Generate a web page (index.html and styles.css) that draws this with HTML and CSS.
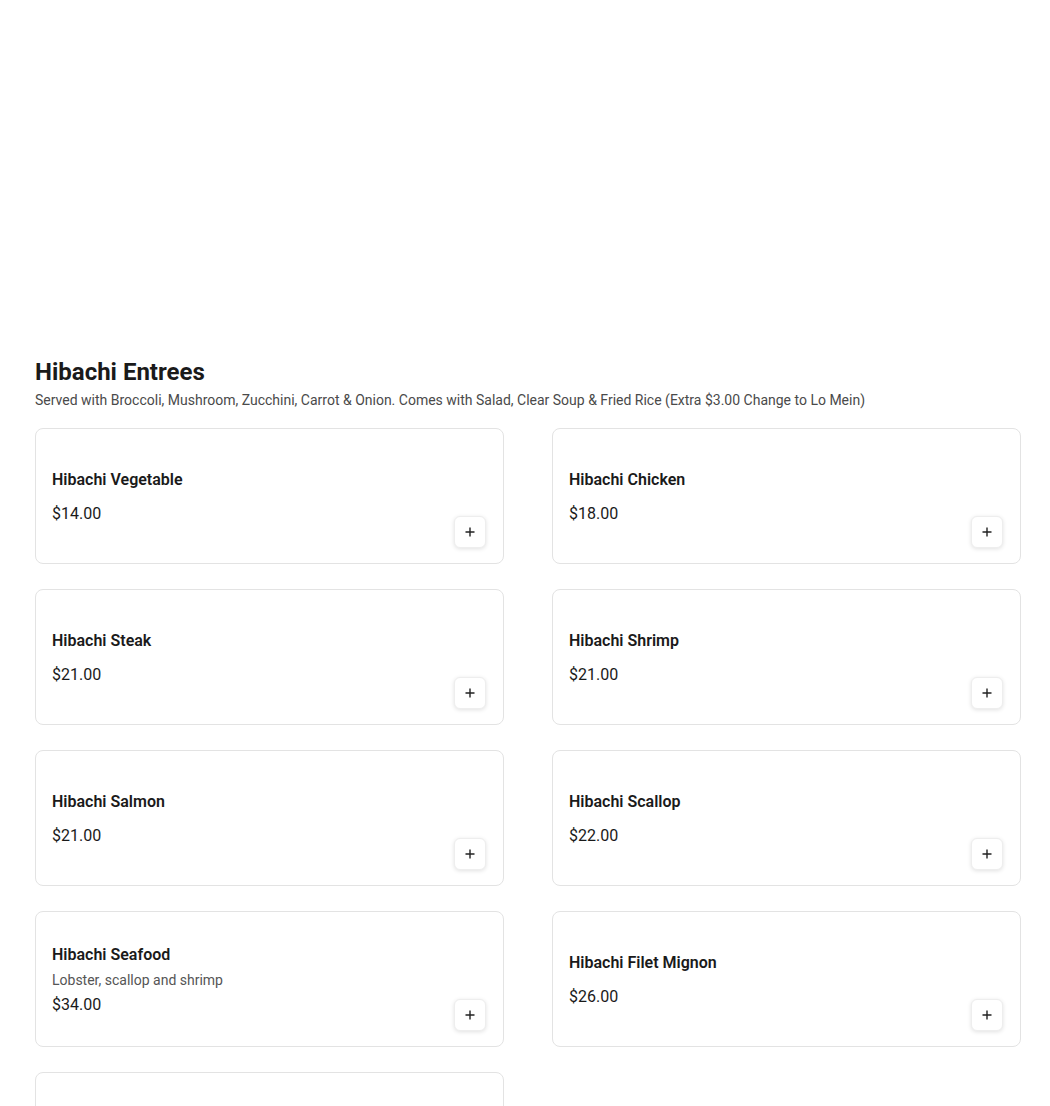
FILE: index.html
```html
<!DOCTYPE html>
<html>
<head>
<meta charset="utf-8">
<link rel="stylesheet" href="styles.css">
</head>
<body>
<main class="page">
  <section class="category">
    <h2 class="cat-title">Hibachi Entrees</h2>
    <p class="cat-desc">Served with Broccoli, Mushroom, Zucchini, Carrot &amp; Onion. Comes with Salad, Clear Soup &amp; Fried Rice (Extra $3.00 Change to Lo Mein)</p>
    <div class="grid">
      <div class="card"><div class="info"><div class="name">Hibachi Vegetable</div><div class="price">$14.00</div></div><button class="add"><svg width="12" height="12" viewBox="0 0 12 12"><path d="M6 1.5v9M1.5 6h9" stroke="#222" stroke-width="1.4"/></svg></button></div>
      <div class="card"><div class="info"><div class="name">Hibachi Chicken</div><div class="price">$18.00</div></div><button class="add"><svg width="12" height="12" viewBox="0 0 12 12"><path d="M6 1.5v9M1.5 6h9" stroke="#222" stroke-width="1.4"/></svg></button></div>
      <div class="card"><div class="info"><div class="name">Hibachi Steak</div><div class="price">$21.00</div></div><button class="add"><svg width="12" height="12" viewBox="0 0 12 12"><path d="M6 1.5v9M1.5 6h9" stroke="#222" stroke-width="1.4"/></svg></button></div>
      <div class="card"><div class="info"><div class="name">Hibachi Shrimp</div><div class="price">$21.00</div></div><button class="add"><svg width="12" height="12" viewBox="0 0 12 12"><path d="M6 1.5v9M1.5 6h9" stroke="#222" stroke-width="1.4"/></svg></button></div>
      <div class="card"><div class="info"><div class="name">Hibachi Salmon</div><div class="price">$21.00</div></div><button class="add"><svg width="12" height="12" viewBox="0 0 12 12"><path d="M6 1.5v9M1.5 6h9" stroke="#222" stroke-width="1.4"/></svg></button></div>
      <div class="card"><div class="info"><div class="name">Hibachi Scallop</div><div class="price">$22.00</div></div><button class="add"><svg width="12" height="12" viewBox="0 0 12 12"><path d="M6 1.5v9M1.5 6h9" stroke="#222" stroke-width="1.4"/></svg></button></div>
      <div class="card"><div class="info"><div class="name">Hibachi Seafood</div><div class="desc">Lobster, scallop and shrimp</div><div class="price">$34.00</div></div><button class="add"><svg width="12" height="12" viewBox="0 0 12 12"><path d="M6 1.5v9M1.5 6h9" stroke="#222" stroke-width="1.4"/></svg></button></div>
      <div class="card"><div class="info"><div class="name">Hibachi Filet Mignon</div><div class="price">$26.00</div></div><button class="add"><svg width="12" height="12" viewBox="0 0 12 12"><path d="M6 1.5v9M1.5 6h9" stroke="#222" stroke-width="1.4"/></svg></button></div>
      <div class="card"><div class="info"><div class="name">Hibachi Lobster</div><div class="price">$30.00</div></div><button class="add"><svg width="12" height="12" viewBox="0 0 12 12"><path d="M6 1.5v9M1.5 6h9" stroke="#222" stroke-width="1.4"/></svg></button></div>
    </div>
  </section>
</main>
</body>
</html>
```

FILE: styles.css
```css
* { box-sizing: border-box; }
html, body { margin: 0; padding: 0; background: #fff; }
body {
  font-family: Roboto, "Liberation Sans", sans-serif;
  color: #1f1f1f;
}
.page {
  padding: 358px 29px 0 35px;
}
.cat-title {
  margin: 0;
  font-size: 24px;
  line-height: 28px;
  font-weight: 700;
  color: #1a1a1a;
}
.cat-desc {
  margin: 4px 0 0;
  font-size: 14px;
  line-height: 20px;
  color: #4a4a4a;
}
.grid {
  margin-top: 18px;
  display: grid;
  grid-template-columns: 469px 469px;
  column-gap: 48px;
  row-gap: 25px;
}
.card {
  height: 136px;
  border: 1px solid #e3e3e3;
  border-radius: 8px;
  padding: 17px 17px 15px 16px;
  display: flex;
  justify-content: space-between;
  background: #fff;
}
.info {
  display: flex;
  flex-direction: column;
  justify-content: center;
}
.name {
  font-size: 16px;
  line-height: 22px;
  font-weight: 600;
  color: #1a1a1a;
}
.desc {
  font-size: 14px;
  line-height: 20px;
  color: #555;
  margin-top: 4px;
}
.price {
  font-size: 16px;
  line-height: 22px;
  color: #1a1a1a;
  margin-top: 12px;
}
.desc + .price { margin-top: 4px; }
.add {
  align-self: flex-end;
  width: 32px;
  height: 32px;
  border: 1px solid #eeeeee;
  border-radius: 6px;
  background: #fff;
  box-shadow: 0 1px 4px rgba(0,0,0,0.12);
  display: flex;
  align-items: center;
  justify-content: center;
  padding: 0;
}
```
